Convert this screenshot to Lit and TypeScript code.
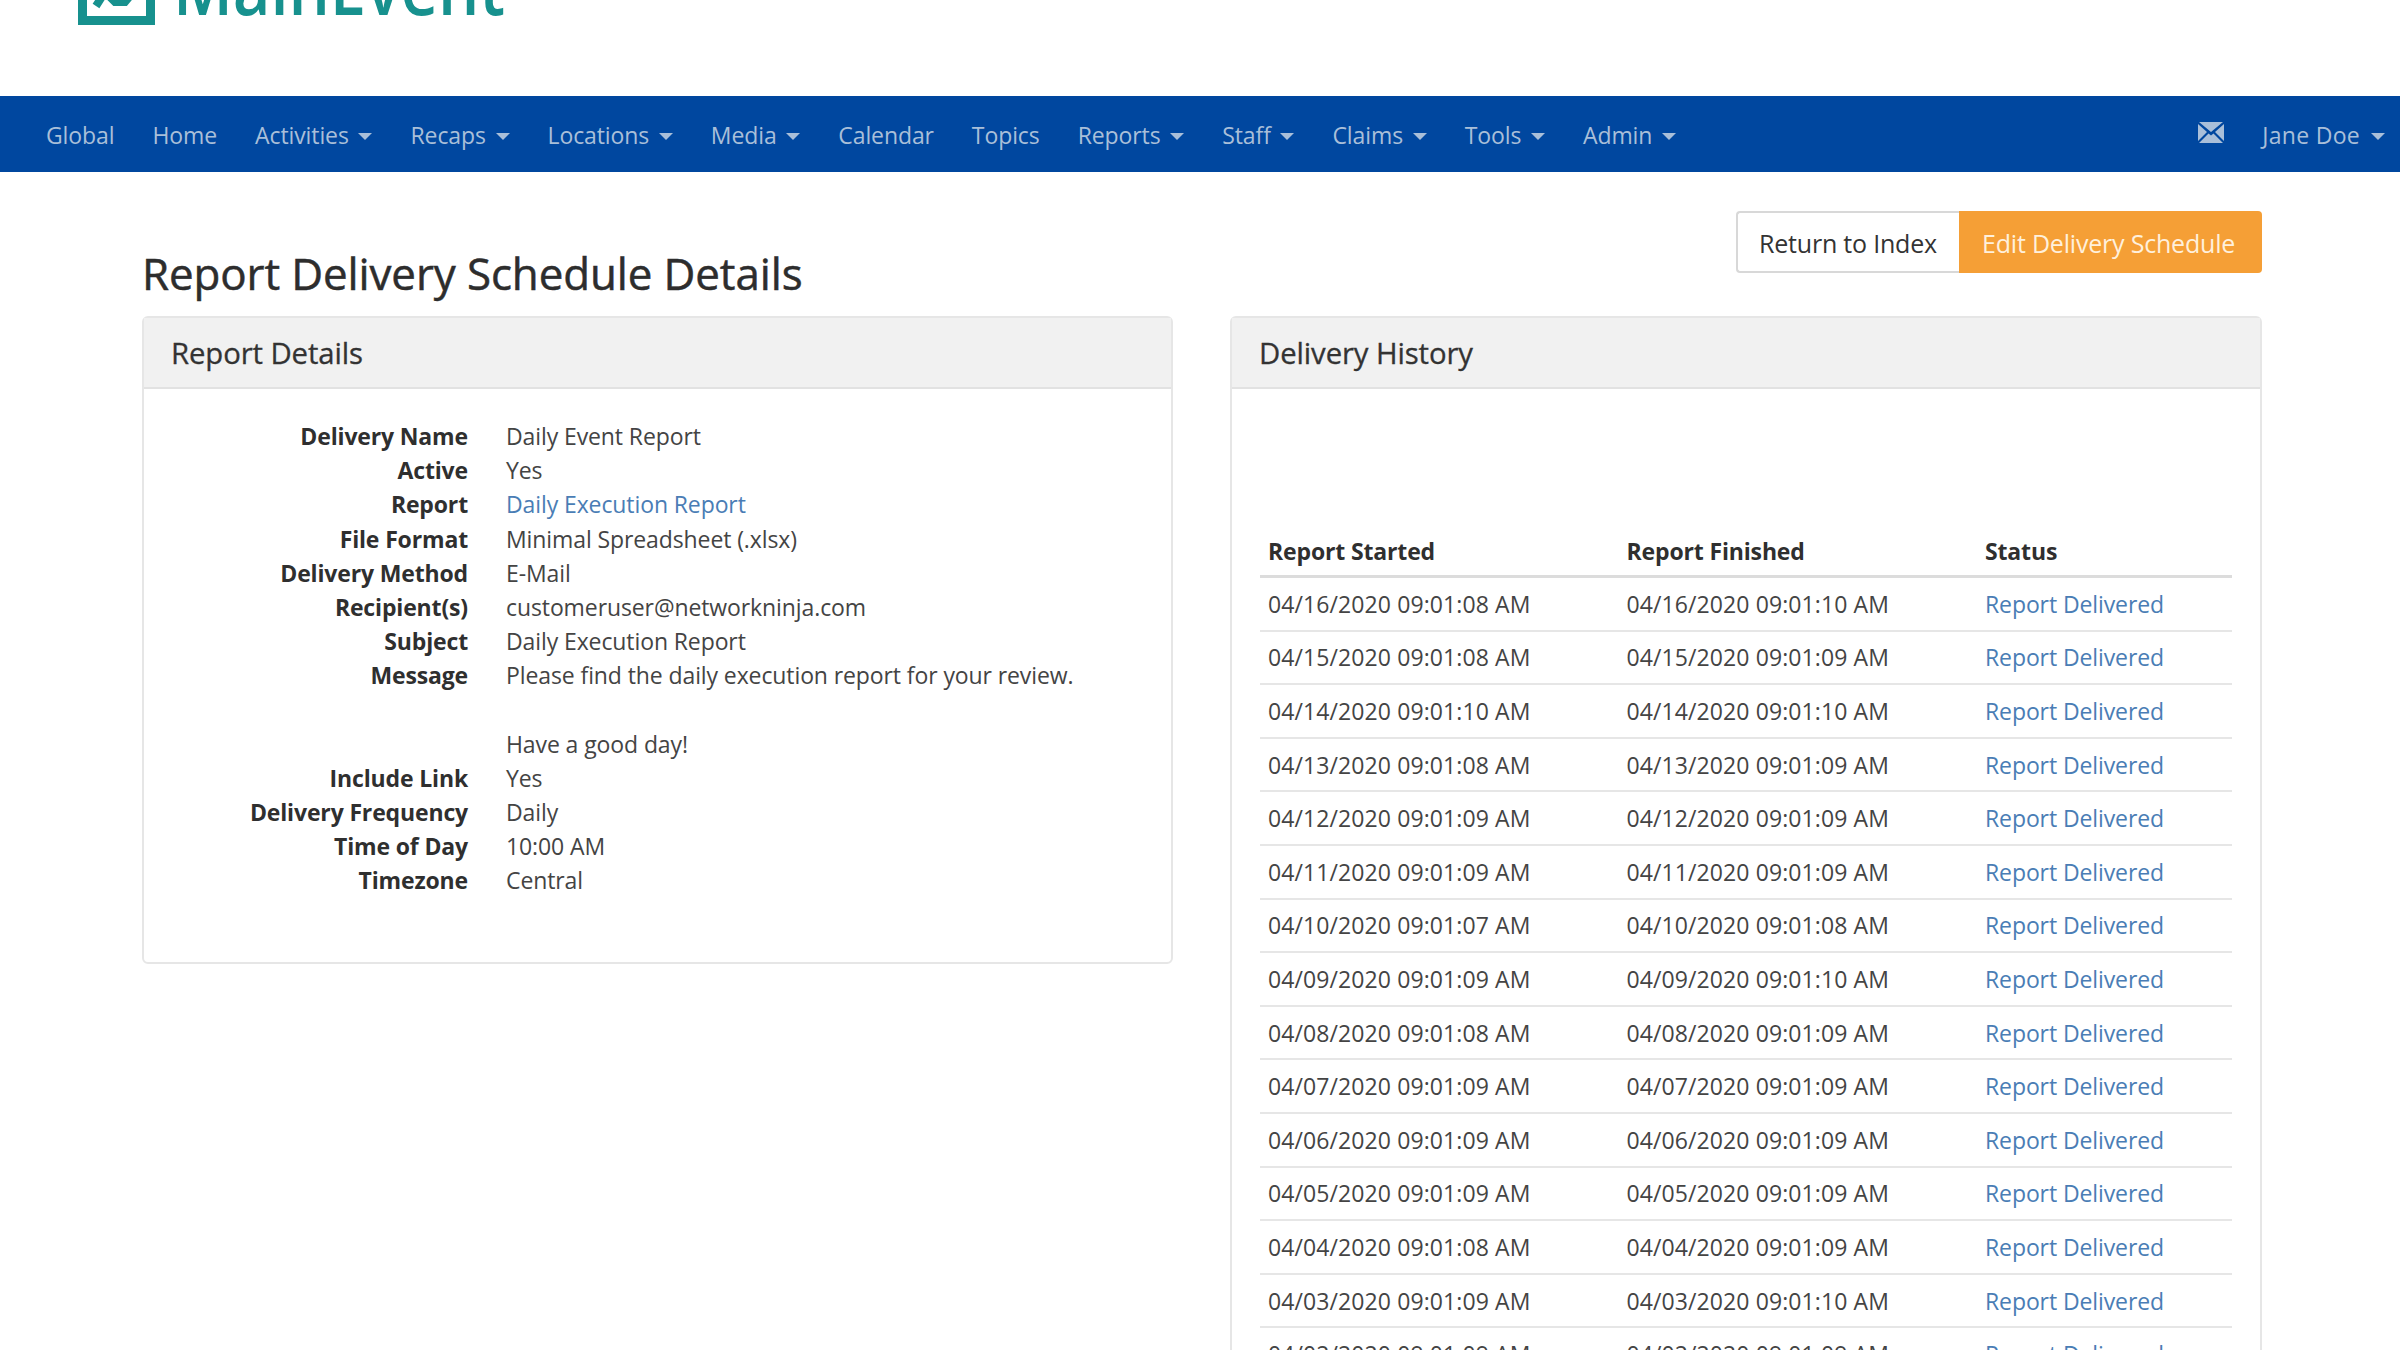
import { LitElement, css, html, svg } from 'lit';
import { customElement } from 'lit/decorators.js';

const NAV = [
  ['Global', false], ['Home', false], ['Activities', true], ['Recaps', true],
  ['Locations', true], ['Media', true], ['Calendar', false], ['Topics', false],
  ['Reports', true], ['Staff', true], ['Claims', true], ['Tools', true], ['Admin', true],
] as [string, boolean][];

const DETAILS = [
  ['Delivery Name', 'Daily Event Report'],
  ['Active', 'Yes'],
  ['Report', 'Daily Execution Report', true],
  ['File Format', 'Minimal Spreadsheet (.xlsx)'],
  ['Delivery Method', 'E-Mail'],
  ['Recipient(s)', 'customeruser@networkninja.com'],
  ['Subject', 'Daily Execution Report'],
  ['Message', 'Please find the daily execution report for your review.'],
  ['', ''],
  ['', 'Have a good day!'],
  ['Include Link', 'Yes'],
  ['Delivery Frequency', 'Daily'],
  ['Time of Day', '10:00 AM'],
  ['Timezone', 'Central'],
] as [string, string, boolean?][];

const HISTORY = [
  ['04/16', '08', '10'], ['04/15', '08', '09'], ['04/14', '10', '10'], ['04/13', '08', '09'],
  ['04/12', '09', '09'], ['04/11', '09', '09'], ['04/10', '07', '08'], ['04/09', '09', '10'],
  ['04/08', '08', '09'], ['04/07', '09', '09'], ['04/06', '09', '09'], ['04/05', '09', '09'],
  ['04/04', '08', '09'], ['04/03', '09', '10'], ['04/02', '09', '09'],
];

const envelope = svg`<svg class="mail" width="26" height="22" viewBox="0 0 26 22">
  <path fill="currentColor" d="M1 0h24L13 10zM0 2l9 8-9 9zM26 2v17l-9-9zM10.500 11.500 13 13.500l2.500-2L25 21H1z"/>
</svg>`;

@customElement('app-root')
export class AppRoot extends LitElement {
  static styles = css`
    :host {
      display: block;
      height: 1350px;
      overflow: hidden;
      background: #fff;
      color: #444;
      font-family: 'Open Sans', 'Noto Sans', sans-serif;
      font-size: 23px;
      letter-spacing: -0.1px;
    }
    a {
      color: #4a7db5;
      text-decoration: none;
    }

    .brand {
      height: 96px;
      overflow: hidden;
    }
    .logo {
      display: block;
      margin: -56px 0 0 78px;
    }
    .logo-text {
      font-size: 76px;
      fill: #17918e;
      font-weight: 600;
    }

    nav {
      height: 76px;
      box-sizing: border-box;
      background: #00479f;
      color: #a9bfd9;
      display: flex;
      align-items: center;
      padding: 2px 0 0 27px;
    }
    .item {
      padding: 0 19px;
      display: flex;
      align-items: center;
      white-space: nowrap;
    }
    .caret {
      display: inline-block;
      margin-left: 9.700px;
      margin-top: 3px;
      border-top: 7px solid currentColor;
      border-left: 7px solid transparent;
      border-right: 7px solid transparent;
    }
    .spacer {
      flex: 1;
    }
    .mail {
      display: block;
      margin-top: -4px;
    }
    .item.last {
      padding-right: 15px;
      letter-spacing: 0.300px;
    }
    .item.last .caret {
      margin-left: 11px;
    }

    main {
      padding: 39px 138px 0 142px;
    }
    .title-row {
      display: flex;
      justify-content: space-between;
      align-items: flex-start;
      height: 105px;
    }
    h1 {
      margin: 33px 0 0;
      font-size: 43.900px;
      line-height: 58px;
      font-weight: 400;
      letter-spacing: -0.100px;
      -webkit-text-stroke: 0.5px currentColor;
      color: #2d2d2d;
    }
    .btns {
      display: flex;
    }
    .btn {
      height: 62px;
      box-sizing: border-box;
      display: flex;
      align-items: center;
      padding: 2px 23px 0;
      font-size: 25px;
      letter-spacing: -0.200px;
      white-space: nowrap;
    }
    .btn.ghost {
      width: 223px;
      padding: 2px 21px 0;
      border: 2px solid #d8d8d8;
      border-right: 0;
      border-radius: 4px 0 0 4px;
      color: #333;
    }
    .btn.primary {
      width: 303px;
      background: #f59f36;
      color: #fff0dc;
      border-radius: 0 4px 4px 0;
    }

    .columns {
      display: grid;
      grid-template-columns: 1031px 1032px;
      justify-content: space-between;
      align-items: start;
    }
    .panel {
      border: 2px solid #e6e6e6;
      border-radius: 6px;
      background: #fff;
    }
    .panel-head {
      height: 71px;
      box-sizing: border-box;
      background: #f1f1f1;
      border-bottom: 2px solid #e2e2e2;
      display: flex;
      align-items: center;
      padding-left: 27px;
      font-size: 29.300px;
      letter-spacing: -0.100px;
      -webkit-text-stroke: 0.3px currentColor;
      color: #333;
    }

    dl {
      margin: 0;
      padding: 30px 0 64px;
      display: grid;
      grid-template-columns: 324px 1fr;
      grid-auto-rows: 34.200px;
      column-gap: 38px;
      line-height: 34.200px;
    }
    dt {
      margin: 0;
      text-align: right;
      font-weight: 700;
      color: #2f2f2f;
      letter-spacing: -0.150px;
    }
    dd {
      margin: 0;
    }

    .history {
      height: 1100px;
      padding: 137px 28px 0 28px;
    }
    table {
      width: 100%;
      border-collapse: collapse;
      table-layout: fixed;
    }
    th {
      text-align: left;
      padding: 0 8px;
      height: 49px;
      font-weight: 700;
      color: #2f2f2f;
      border-bottom: 3px solid #dcdcdc;
      letter-spacing: -0.150px;
    }
    td {
      padding: 0 8px;
      height: 51.600px;
      border-bottom: 2px solid #e6e6e6;
    }
    td.when {
      letter-spacing: 0.100px;
    }
    col.c1, col.c2 {
      width: 358.500px;
    }
  `;

  render() {
    return html`
      <div class="brand">
        <svg class="logo" width="460" height="82" viewBox="0 0 460 82">
          <rect x="4.500" y="7.500" width="68" height="69" fill="none" stroke="#17918e" stroke-width="9"/>
          <path d="M18 62l9-14 10 10 10 0 10-12" fill="none" stroke="#17918e" stroke-width="8"/>
          <text class="logo-text" x="95" y="71" textLength="332" lengthAdjust="spacingAndGlyphs">MainEvent</text>
        </svg>
      </div>
      <nav>
        ${NAV.map(([label, drop]) => html`
          <span class="item">${label}${drop ? html`<span class="caret"></span>` : ''}</span>
        `)}
        <span class="spacer"></span>
        <span class="item">${envelope}</span>
        <span class="item last">Jane Doe<span class="caret"></span></span>
      </nav>
      <main>
        <div class="title-row">
          <h1>Report Delivery Schedule Details</h1>
          <div class="btns">
            <a class="btn ghost">Return to Index</a>
            <a class="btn primary">Edit Delivery Schedule</a>
          </div>
        </div>
        <div class="columns">
          <section class="panel">
            <div class="panel-head">Report Details</div>
            <dl>
              ${DETAILS.map(([k, v, link]) => html`
                <dt>${k}</dt>
                <dd>${link ? html`<a>${v}</a>` : v}</dd>
              `)}
            </dl>
          </section>
          <section class="panel">
            <div class="panel-head">Delivery History</div>
            <div class="history">
              <table>
                <colgroup><col class="c1"><col class="c2"><col></colgroup>
                <thead>
                  <tr><th>Report Started</th><th>Report Finished</th><th>Status</th></tr>
                </thead>
                <tbody>
                  ${HISTORY.map(([d, a, b]) => html`
                    <tr>
                      <td class="when">${d}/2020 09:01:${a} AM</td>
                      <td class="when">${d}/2020 09:01:${b} AM</td>
                      <td><a>Report Delivered</a></td>
                    </tr>
                  `)}
                </tbody>
              </table>
            </div>
          </section>
        </div>
      </main>
    `;
  }
}
